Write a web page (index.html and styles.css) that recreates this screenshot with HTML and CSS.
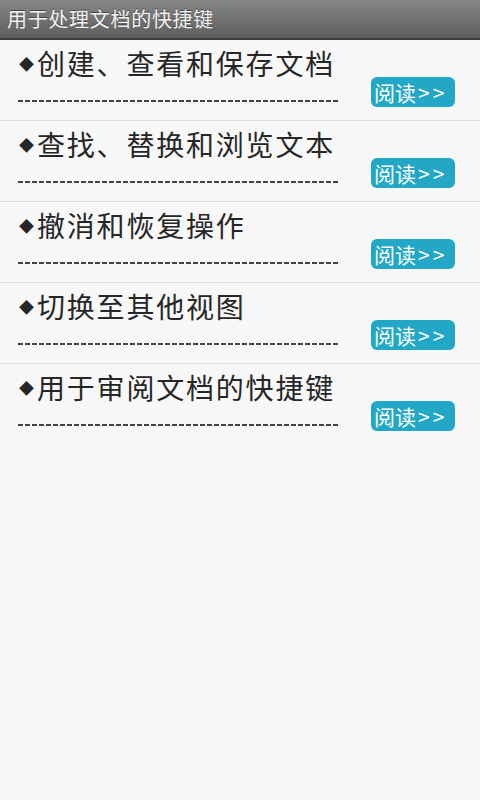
FILE: index.html
```html
<!DOCTYPE html>
<html lang="zh-CN">
<head>
<meta charset="utf-8">
<title>用于处理文档的快捷键</title>
<link rel="stylesheet" href="styles.css">
</head>
<body>
<header class="titlebar">用于处理文档的快捷键</header>
<ul class="list">
  <li class="row">
    <div class="left">
      <div class="title"><span class="dot">◆</span>创建、查看和保存文档</div>
      <div class="dash"></div>
    </div>
    <a class="btn">阅读<span class="arr">&gt;&gt;</span></a>
  </li>
  <li class="row">
    <div class="left">
      <div class="title"><span class="dot">◆</span>查找、替换和浏览文本</div>
      <div class="dash"></div>
    </div>
    <a class="btn">阅读<span class="arr">&gt;&gt;</span></a>
  </li>
  <li class="row">
    <div class="left">
      <div class="title"><span class="dot">◆</span>撤消和恢复操作</div>
      <div class="dash"></div>
    </div>
    <a class="btn">阅读<span class="arr">&gt;&gt;</span></a>
  </li>
  <li class="row">
    <div class="left">
      <div class="title"><span class="dot">◆</span>切换至其他视图</div>
      <div class="dash"></div>
    </div>
    <a class="btn">阅读<span class="arr">&gt;&gt;</span></a>
  </li>
  <li class="row last">
    <div class="left">
      <div class="title"><span class="dot">◆</span>用于审阅文档的快捷键</div>
      <div class="dash"></div>
    </div>
    <a class="btn">阅读<span class="arr">&gt;&gt;</span></a>
  </li>
</ul>
</body>
</html>
```
FILE: styles.css
```css
* { box-sizing: border-box; }
html, body {
  margin: 0;
  padding: 0;
  height: 100%;
}
body {
  background: #f7f7f7;
  font-family: "Noto Sans CJK SC", "Noto Sans", sans-serif;
  color: #222;
}
.titlebar {
  height: 40px;
  background: linear-gradient(#868686, #5e5e5e);
  border-bottom: 2px solid #3e3e3e;
  color: #f2f2f2;
  font-size: 20px;
  letter-spacing: 0.7px;
  line-height: 38px;
  padding-left: 7px;
  text-shadow: 0 -1px 0 #444;
}
.list {
  list-style: none;
  margin: 0;
  padding: 0;
}
.row {
  display: flex;
  align-items: flex-start;
  height: 81px;
  padding: 7px 25px 0 19px;
  border-bottom: 1px solid #dedede;
}
.row.last { border-bottom: none; }
.left {
  width: 320px;
}
.title {
  font-size: 28px;
  letter-spacing: 1.8px;
  line-height: 32px;
  color: #262626;
  white-space: nowrap;
}
.dot {
  display: inline-block;
  font-size: 15px;
  letter-spacing: 0;
  width: 18px;
  vertical-align: 5px;
  line-height: 14px;
}
.dash {
  margin-top: 21px;
  height: 2px;
  margin-left: -1px;
  background: repeating-linear-gradient(90deg, #444 0 5px, transparent 5px 7px);
}
.btn {
  margin-left: auto;
  margin-top: 30px;
  width: 84px;
  height: 30px;
  padding-left: 3px;
  background: #22a7c7;
  border-radius: 6px;
  color: #fff;
  font-size: 21px;
  line-height: 30px;
  text-align: left;
  white-space: nowrap;
}
.arr {
  letter-spacing: 3px;
  margin-left: 2px;
}
```
